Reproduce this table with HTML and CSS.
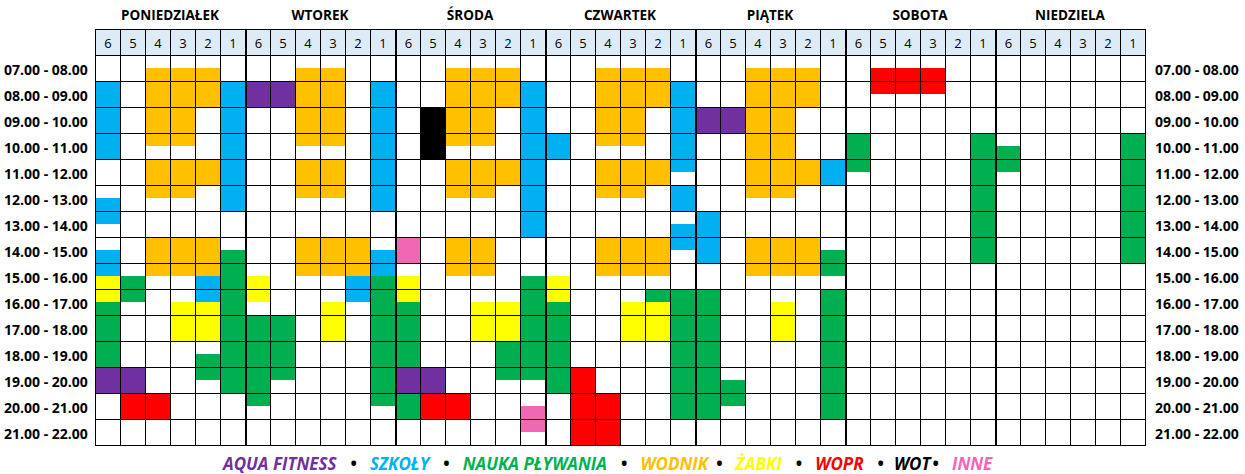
FILE: index.html
```html
<!DOCTYPE html>
<html lang="pl">
<head>
<meta charset="utf-8">
<title>Grafik zajęć – basen</title>
<link rel="stylesheet" href="styles.css">
</head>
<body>
<div class="sheet">
  <div class="days">
    <div class="day">PONIEDZIAŁEK</div>
    <div class="day">WTOREK</div>
    <div class="day">ŚRODA</div>
    <div class="day">CZWARTEK</div>
    <div class="day">PIĄTEK</div>
    <div class="day">SOBOTA</div>
    <div class="day">NIEDZIELA</div>
  </div>
  <div class="main">
    <div class="times">
      <div class="t">07.00 - 08.00</div>
      <div class="t">08.00 - 09.00</div>
      <div class="t">09.00 - 10.00</div>
      <div class="t">10.00 - 11.00</div>
      <div class="t">11.00 - 12.00</div>
      <div class="t">12.00 - 13.00</div>
      <div class="t">13.00 - 14.00</div>
      <div class="t">14.00 - 15.00</div>
      <div class="t">15.00 - 16.00</div>
      <div class="t">16.00 - 17.00</div>
      <div class="t">17.00 - 18.00</div>
      <div class="t">18.00 - 19.00</div>
      <div class="t">19.00 - 20.00</div>
      <div class="t">20.00 - 21.00</div>
      <div class="t">21.00 - 22.00</div>
    </div>
    <div class="grid" id="grid">
      <div class="hd">6</div><div class="hd">5</div><div class="hd">4</div><div class="hd">3</div><div class="hd">2</div><div class="hd">1</div>
      <div class="hd df">6</div><div class="hd">5</div><div class="hd">4</div><div class="hd">3</div><div class="hd">2</div><div class="hd">1</div>
      <div class="hd df">6</div><div class="hd">5</div><div class="hd">4</div><div class="hd">3</div><div class="hd">2</div><div class="hd">1</div>
      <div class="hd df">6</div><div class="hd">5</div><div class="hd">4</div><div class="hd">3</div><div class="hd">2</div><div class="hd">1</div>
      <div class="hd df">6</div><div class="hd">5</div><div class="hd">4</div><div class="hd">3</div><div class="hd">2</div><div class="hd">1</div>
      <div class="hd df">6</div><div class="hd">5</div><div class="hd">4</div><div class="hd">3</div><div class="hd">2</div><div class="hd">1</div>
      <div class="hd df">6</div><div class="hd">5</div><div class="hd">4</div><div class="hd">3</div><div class="hd">2</div><div class="hd">1</div>
    </div>
    <div class="times right">
      <div class="t">07.00 - 08.00</div>
      <div class="t">08.00 - 09.00</div>
      <div class="t">09.00 - 10.00</div>
      <div class="t">10.00 - 11.00</div>
      <div class="t">11.00 - 12.00</div>
      <div class="t">12.00 - 13.00</div>
      <div class="t">13.00 - 14.00</div>
      <div class="t">14.00 - 15.00</div>
      <div class="t">15.00 - 16.00</div>
      <div class="t">16.00 - 17.00</div>
      <div class="t">17.00 - 18.00</div>
      <div class="t">18.00 - 19.00</div>
      <div class="t">19.00 - 20.00</div>
      <div class="t">20.00 - 21.00</div>
      <div class="t">21.00 - 22.00</div>
    </div>
  </div>
  <div class="legend">
    <span class="lg lg-aqua">AQUA FITNESS</span><span class="dot">•</span>
    <span class="lg lg-szk">SZKOŁY</span><span class="dot">•</span>
    <span class="lg lg-nauka">NAUKA PŁYWANIA</span><span class="dot">•</span>
    <span class="lg lg-wod">WODNIK</span><span class="dot dot-near">•</span>
    <span class="lg lg-zab">ŻABKI</span><span class="dot">•</span>
    <span class="lg lg-wopr">WOPR</span><span class="dot dot-wot">•</span>
    <span class="lg lg-wot">WOT</span><span class="dot dot-tight">•</span>
    <span class="lg lg-inne">INNE</span>
  </div>
</div>
<script src="script.js"></script>
</body>
</html>
```

FILE: styles.css
```css
* { box-sizing: border-box; }
html, body { margin: 0; background: #fff; }
body {
  width: 1245px;
  height: 474px;
  overflow: hidden;
  font-family: "Open Sans", "Liberation Sans", sans-serif;
  color: #000;
}
.days {
  display: flex;
  height: 29px;
  padding-left: 95px;
}
.day {
  width: 150px;
  text-align: center;
  font-weight: 700;
  font-size: 13.5px;
  line-height: 30px;
}
.main { display: flex; }
.times {
  flex: 0 0 95px;
  padding-top: 27px;
  padding-left: 4px;
}
.times.right {
  flex: 0 0 auto;
  padding-left: 9px;
}
.t {
  height: 26px;
  line-height: 28px;
  font-weight: 700;
  font-size: 14px;
  white-space: nowrap;
}
.grid {
  flex: 0 0 1051px;
  display: grid;
  grid-template-columns: repeat(42, 24px);
  grid-auto-rows: 25px;
  gap: 1px;
  padding: 1px;
  background: #000;
}
.hd {
  background: #ddebf7;
  font-size: 13px;
  display: flex;
  align-items: center;
  justify-content: center;
}
.df { margin-left: 1px; }
.cell {
  background: #fff;
  display: flex;
  flex-direction: column;
}
.half { flex: 1 1 0; }
.half:first-child { flex: 0 0 12px; }
.c-o { background: #ffc000; }
.c-b { background: #00b0f0; }
.c-g { background: #00b050; }
.c-y { background: #ffff00; }
.c-p { background: #7030a0; }
.c-r { background: #ff0000; }
.c-k { background: #000; }
.c-i { background: #f067b4; }

.legend {
  display: flex;
  align-items: center;
  height: 28px;
  padding-left: 223px;
  padding-top: 6px;
  font-size: 17px;
  font-weight: 700;
  font-style: italic;
  white-space: nowrap;
}
.dot {
  color: #000;
  font-style: normal;
  margin: 0 13px 0 14px;
}
.dot-near { margin: 0 13px 0 8px; }
.dot-wot { margin: 0 10px 0 14px; }
.dot-tight { margin: 0 13px 0 2px; }
.lg-aqua { color: #7030a0; }
.lg-szk { color: #00b0f0; }
.lg-nauka { color: #00b050; }
.lg-wod { color: #ffc000; }
.lg-zab { color: #ffff00; }
.lg-wopr { color: #ff0000; }
.lg-wot { color: #000; }
.lg-inne { color: #f067b4; }
```

FILE: script.js
```js
// Half-hour rows (07:00 .. 22:00), 7 days x 6 columns (6,5,4,3,2,1).
// . empty, o wodnik, b szkoly, g nauka, y zabki, p aqua, r wopr, k wot, i inne
(function () {
  var rows = [
    "...... ...... ...... ...... ...... ...... ......",
    "..ooo. ..oo.. ..ooo. ..ooo. ..ooo. .rrr.. ......",
    "b.ooob ppoo.b ..ooob ..ooob ..ooo. .rrr.. ......",
    "b.ooob ppoo.b ..ooob ..ooob ..ooo. ...... ......",
    "b.oo.b ..oo.b .koo.b ..oo.b ppoo.. ...... ......",
    "b.oo.b ..oo.b .koo.b ..oo.b ppoo.. ...... ......",
    "b.oo.b ..oo.b .koo.b b.oo.b ..oo.. g....g .....g",
    "b....b .....b .k...b b....b ..oo.. g....g g....g",
    "..ooob ..oo.b ..ooob ..ooob ..ooob g....g g....g",
    "..ooob ..oo.b ..ooob ..ooo. ..ooob .....g .....g",
    "..oo.b ..oo.b ..oo.b ..oo.b ..oo.. .....g .....g",
    "b....b .....b .....b .....b ...... .....g .....g",
    "b..... ...... .....b ...... b..... .....g .....g",
    "...... ...... .....b .....b b..... .....g .....g",
    "..ooo. ..ooo. i.oo.. ..ooob b.ooo. .....g .....g",
    "b.ooog ..ooob i.oo.. ..ooo. b.ooog .....g .....g",
    "b.ooog ..ooob ..oo.. ..ooo. ..ooog ...... ......",
    "yg..bg y...bg y....g y..... ...... ...... ......",
    "yg..bg y...bg y....g y...gg g....g ...... ......",
    "g..yyg ...y.g g..yyg g..yyg g..y.g ...... ......",
    "g..yyg gg.y.g g..yyg g..yyg g..y.g ...... ......",
    "g..yyg gg.y.g g..yyg g..yyg g..y.g ...... ......",
    "g....g gg...g g...gg g....g g....g ...... ......",
    "g...gg gg...g g...gg g....g g....g ...... ......",
    "pp..gg gg...g pp..gg gr...g g....g ...... ......",
    "pp...g g....g pp.... gr...g gg...g ...... ......",
    ".rr... g....g grr... .rr..g gg...g ...... ......",
    ".rr... ...... grr..i .rr..g g....g ...... ......",
    "...... ...... .....i .rr... ...... ...... ......",
    "...... ...... ...... .rr... ...... ...... ......"
  ];
  var grid = document.getElementById('grid');
  for (var h = 0; h < 15; h++) {
    var first = rows[2 * h].replace(/ /g, '');
    var second = rows[2 * h + 1].replace(/ /g, '');
    for (var c = 0; c < 42; c++) {
      var cell = document.createElement('div');
      cell.className = 'cell' + (c % 6 === 0 && c > 0 ? ' df' : '');
      var halves = [first.charAt(c), second.charAt(c)];
      for (var k = 0; k < 2; k++) {
        var s = document.createElement('div');
        s.className = 'half' + (halves[k] !== '.' ? ' c-' + halves[k] : '');
        cell.appendChild(s);
      }
      grid.appendChild(cell);
    }
  }
})();
```
